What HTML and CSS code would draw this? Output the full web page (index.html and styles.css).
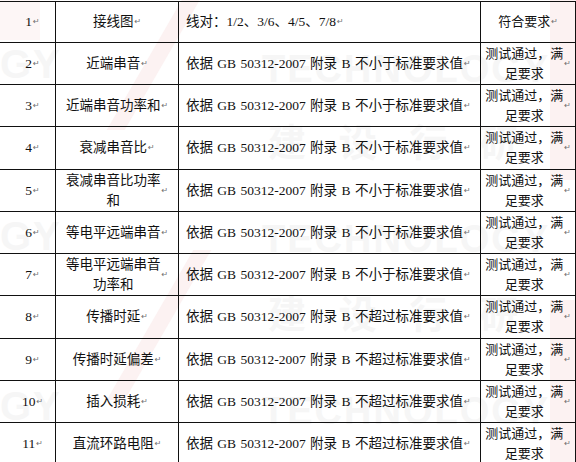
FILE: index.html
```html
<!DOCTYPE html>
<html lang="zh-CN">
<head>
<meta charset="utf-8">
<title>测试结果表</title>
<link rel="stylesheet" href="styles.css">
</head>
<body>
<div class="sheet">
  <div class="watermark" aria-hidden="true">
    <span class="wm-pink wm-p1"></span>
    <span class="wm-pink wm-p2"></span>
    <span class="wm-pink wm-p3"></span>
    <span class="wm-pink wm-p4"></span>
    <span class="wm-pink wm-p5"></span>
    <span class="wm-text wm-t1">TECHNOLOGY</span>
    <span class="wm-text wm-t2">TECHNOLOGY</span>
    <span class="wm-text wm-t3">TECHNOLOGY</span>
    <span class="wm-cjk wm-c1">建 设 行 研</span>
    <span class="wm-cjk wm-c2">建 设 行 研</span>
    <span class="wm-text wm-g1">GY</span>
    <span class="wm-text wm-g2">GY</span>
    <span class="wm-text wm-g3">GY</span>
  </div>
  <div class="grid">
    <div class="cell num">1<span class="pm">↵</span></div>
    <div class="cell name">接线图<span class="pm">↵</span></div>
    <div class="cell desc">线对：1/2、3/6、4/5、7/8<span class="pm">↵</span></div>
    <div class="cell res">符合要求<span class="pm">↵</span></div>

    <div class="cell num">2<span class="pm">↵</span></div>
    <div class="cell name">近端串音<span class="pm">↵</span></div>
    <div class="cell desc">依据 GB 50312-2007 附录 B 不小于标准要求值<span class="pm">↵</span></div>
    <div class="cell res">测试通过，满<br>足要求<span class="pm">↵</span></div>

    <div class="cell num">3<span class="pm">↵</span></div>
    <div class="cell name">近端串音功率和<span class="pm">↵</span></div>
    <div class="cell desc">依据 GB 50312-2007 附录 B 不小于标准要求值<span class="pm">↵</span></div>
    <div class="cell res">测试通过，满<br>足要求<span class="pm">↵</span></div>

    <div class="cell num">4<span class="pm">↵</span></div>
    <div class="cell name">衰减串音比<span class="pm">↵</span></div>
    <div class="cell desc">依据 GB 50312-2007 附录 B 不小于标准要求值<span class="pm">↵</span></div>
    <div class="cell res">测试通过，满<br>足要求<span class="pm">↵</span></div>

    <div class="cell num">5<span class="pm">↵</span></div>
    <div class="cell name">衰减串音比功率<br>和<span class="pm">↵</span></div>
    <div class="cell desc">依据 GB 50312-2007 附录 B 不小于标准要求值<span class="pm">↵</span></div>
    <div class="cell res">测试通过，满<br>足要求<span class="pm">↵</span></div>

    <div class="cell num">6<span class="pm">↵</span></div>
    <div class="cell name">等电平远端串音<span class="pm">↵</span></div>
    <div class="cell desc">依据 GB 50312-2007 附录 B 不小于标准要求值<span class="pm">↵</span></div>
    <div class="cell res">测试通过，满<br>足要求<span class="pm">↵</span></div>

    <div class="cell num">7<span class="pm">↵</span></div>
    <div class="cell name">等电平远端串音<br>功率和<span class="pm">↵</span></div>
    <div class="cell desc">依据 GB 50312-2007 附录 B 不小于标准要求值<span class="pm">↵</span></div>
    <div class="cell res">测试通过，满<br>足要求<span class="pm">↵</span></div>

    <div class="cell num">8<span class="pm">↵</span></div>
    <div class="cell name">传播时延<span class="pm">↵</span></div>
    <div class="cell desc">依据 GB 50312-2007 附录 B 不超过标准要求值<span class="pm">↵</span></div>
    <div class="cell res">测试通过，满<br>足要求<span class="pm">↵</span></div>

    <div class="cell num">9<span class="pm">↵</span></div>
    <div class="cell name">传播时延偏差<span class="pm">↵</span></div>
    <div class="cell desc">依据 GB 50312-2007 附录 B 不超过标准要求值<span class="pm">↵</span></div>
    <div class="cell res">测试通过，满<br>足要求<span class="pm">↵</span></div>

    <div class="cell num">10<span class="pm">↵</span></div>
    <div class="cell name">插入损耗<span class="pm">↵</span></div>
    <div class="cell desc">依据 GB 50312-2007 附录 B 不超过标准要求值<span class="pm">↵</span></div>
    <div class="cell res">测试通过，满<br>足要求<span class="pm">↵</span></div>

    <div class="cell num">11<span class="pm">↵</span></div>
    <div class="cell name">直流环路电阻<span class="pm">↵</span></div>
    <div class="cell desc">依据 GB 50312-2007 附录 B 不超过标准要求值<span class="pm">↵</span></div>
    <div class="cell res">测试通过，满<br>足要求<span class="pm">↵</span></div>
  </div>
</div>
</body>
</html>
```

FILE: styles.css
```css
html, body {
  margin: 0;
  padding: 0;
  background: #ffffff;
}

body {
  width: 576px;
  height: 462px;
  overflow: hidden;
}

.sheet {
  position: relative;
  width: 576px;
  height: 462px;
  overflow: hidden;
  padding-top: 1px;
  box-sizing: border-box;
}

.watermark {
  position: absolute;
  inset: 0;
  z-index: 0;
  overflow: hidden;
}

.wm-pink {
  position: absolute;
  background: #fcf2f2;
}

.wm-p1 { left: 150px; top: -20px; width: 18px; height: 150px; transform: skewX(-30deg); }
.wm-p2 { left: 150px; top: 250px; width: 18px; height: 150px; transform: skewX(-30deg); }
.wm-p3 { left: 550px; top: 0; width: 26px; height: 180px; }
.wm-p4 { left: 550px; top: 300px; width: 26px; height: 162px; }
.wm-p5 { left: 0; top: 0; width: 40px; height: 40px; background: #fdf6f6; }

.wm-text {
  position: absolute;
  font-family: "Liberation Sans", sans-serif;
  font-weight: bold;
  color: #f6f6f6;
  letter-spacing: 2px;
}

.wm-t1 { left: 262px; top: 48px; font-size: 38px; }
.wm-t2 { left: 262px; top: 218px; font-size: 38px; }
.wm-t3 { left: 262px; top: 390px; font-size: 38px; }

.wm-g1 { left: 0; top: 42px; font-size: 40px; }
.wm-g2 { left: 0; top: 214px; font-size: 40px; }
.wm-g3 { left: 0; top: 384px; font-size: 40px; }

.wm-cjk {
  position: absolute;
  font-family: "Noto Sans CJK SC", sans-serif;
  font-weight: bold;
  color: #f6f6f6;
}

.wm-c1 { left: 268px; top: 112px; font-size: 38px; letter-spacing: 12px; }
.wm-c2 { left: 268px; top: 284px; font-size: 38px; letter-spacing: 12px; }

.grid {
  position: relative;
  z-index: 1;
  display: grid;
  grid-template-columns: 56px 123px 302px 95px;
  grid-template-rows: 41px 42px 42px 43px 42px 42px 42px 43px 42px 42px 42px;
  border-top: 1px solid #111111;
  font-family: "Liberation Serif", "Noto Sans CJK SC", serif;
  font-size: 13.5px;
  line-height: 20px;
  color: #111111;
}

.cell {
  border-right: 1px solid #111111;
  border-bottom: 1px solid #111111;
  display: flex;
  align-items: center;
  box-sizing: border-box;
  overflow: hidden;
}

.num {
  justify-content: center;
  padding-left: 10px;
}

.name {
  justify-content: center;
  text-align: center;
  padding: 0 4px;
}

.desc {
  justify-content: flex-start;
  padding-left: 7px;
  white-space: nowrap;
  word-spacing: 1px;
}

.res {
  justify-content: center;
  text-align: center;
  padding: 0;
  white-space: nowrap;
  font-size: 13px;
}

.pm {
  font-family: "DejaVu Sans", sans-serif;
  font-size: 8px;
  color: #6f6f6f;
  margin-left: 1px;
}
```
